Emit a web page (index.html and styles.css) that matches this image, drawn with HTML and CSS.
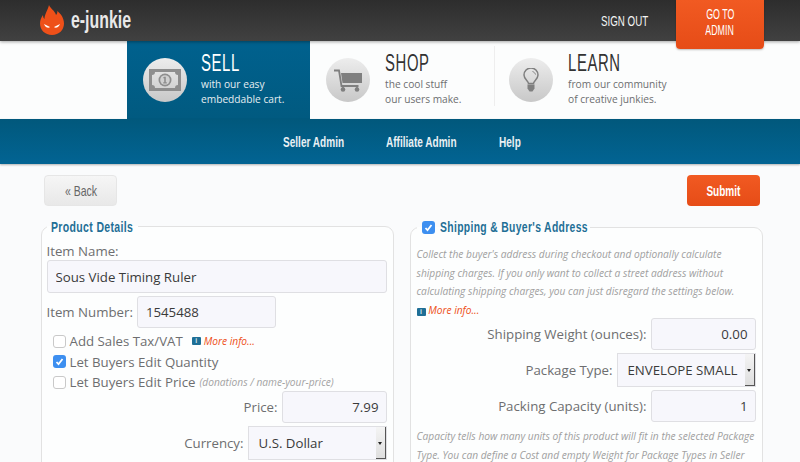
FILE: index.html
```html
<!DOCTYPE html>
<html lang="en">
<head>
<meta charset="utf-8">
<title>e-junkie</title>
<link rel="stylesheet" href="styles.css">
</head>
<body>
<header class="topbar">
  <a class="logo">
    <svg class="flame" viewBox="0 0 24 30" width="24" height="30"><path fill="#ee5019" d="M9 0c1 3 6 6 7 10 1-1 1.500-2 1.300-4C21 9 24 13 24 18.500 24 25 19 30 12 30S0 25 0 18.500C0 15 1.500 12 3 10c0 2 .5 3 1.500 4C4.500 9 8 5 9 0z"/><path fill="#fff" d="M4 19l6 3c-1 1.500-4.500 1-6-3zM20 19l-6 3c1 1.500 4.500 1 6-3z"/></svg>
    <span class="squeeze logo-text">e-junkie</span>
  </a>
  <a class="signout"><span class="squeeze s65">SIGN OUT</span></a>
  <a class="goadmin"><span class="squeeze s63">GO TO</span><span class="squeeze s63">ADMIN</span></a>
</header>
<nav class="sections">
  <div class="tab tab-sell">
    <span class="disc">
      <svg viewBox="0 0 32 22" width="32" height="22"><path fill="#8e8e8e" fill-rule="evenodd" d="M0 0h32v22H0zM6 3c0 2-1 3-3 3v10c2 0 3 1 3 3h20c0-2 1-3 3-3V6c-2 0-3-1-3-3z"/><circle cx="16" cy="11" r="6.500" fill="#8e8e8e"/><circle cx="16" cy="11" r="4.800" fill="#d0d0d0"/><path fill="#8e8e8e" d="M15.200 7.800h1.600v5.400h1v1.200h-3.600v-1.200h1V9.300h-1v-.9z"/></svg>
    </span>
    <div class="tab-text">
      <h2><span class="squeeze s62">SELL</span></h2>
      <p>with our easy<br>embeddable cart.</p>
    </div>
  </div>
  <div class="tab tab-shop">
    <span class="disc">
      <svg viewBox="0 0 28 23" width="28" height="23"><path fill="none" stroke="#7f7f7f" stroke-width="1.800" d="M0 1.500h5l2.500 15.500h17"/><path fill="#7f7f7f" d="M7 4h21v10H8.500z"/><path fill="none" stroke="#7f7f7f" stroke-width="1.500" d="M9 16v3M23 16v3"/><circle cx="9" cy="20.500" r="2.300" fill="#7f7f7f"/><circle cx="23" cy="20.500" r="2.300" fill="#7f7f7f"/></svg>
    </span>
    <div class="tab-text">
      <h2><span class="squeeze s62">SHOP</span></h2>
      <p>the cool stuff<br>our users make.</p>
    </div>
  </div>
  <div class="tab tab-learn">
    <span class="disc">
      <svg viewBox="0 0 16 24" width="16" height="24"><path fill="none" stroke="#7f7f7f" stroke-width="1.500" d="M5.500 15.500c0-2.500-4.500-4-4.500-8.500a7 7 0 0 1 14 0c0 4.500-4.500 6-4.500 8.500z"/><path fill="none" stroke="#7f7f7f" d="M9.500 3.500c1.500.5 2.500 1.500 3 3"/><path fill="#7f7f7f" d="M4.500 16.500h7v4l-2 3h-3l-2-3z"/></svg>
    </span>
    <div class="tab-text">
      <h2><span class="squeeze s62">LEARN</span></h2>
      <p>from our community<br>of creative junkies.</p>
    </div>
  </div>
</nav>
<nav class="subnav">
  <a class="link-seller"><span class="squeeze s67">Seller Admin</span></a>
  <a class="link-affiliate"><span class="squeeze s67">Affiliate Admin</span></a>
  <a class="link-help"><span class="squeeze s67">Help</span></a>
</nav>
<main class="page">
  <div class="actions">
    <a class="btn btn-back"><span class="squeeze s70">« Back</span></a>
    <a class="btn btn-submit"><span class="squeeze s67">Submit</span></a>
  </div>
  <div class="columns">
    <fieldset class="panel">
      <legend class="legend-plain"><span class="squeeze s70 legend-text1">Product Details</span></legend>
      <div class="stack-label">Item Name:</div>
      <input class="field field-full" value="Sous Vide Timing Ruler">
      <div class="row row-number">
        <label>Item Number:</label>
        <input class="field field-num" value="1545488">
      </div>
      <div class="checks">
        <div class="check-row">
          <span class="box"></span><span>Add Sales Tax/VAT</span>
          <span class="info info-gap">i</span><a class="more">More info...</a>
        </div>
        <div class="check-row">
          <span class="box box-on"><svg viewBox="0 0 13 13" width="13" height="13"><path fill="none" stroke="#fff" stroke-width="1.800" d="M3.500 7l2 2.200 4-5.200"/></svg></span><span>Let Buyers Edit Quantity</span>
        </div>
        <div class="check-row">
          <span class="box"></span><span>Let Buyers Edit Price</span>
          <em class="hint">(donations / name-your-price)</em>
        </div>
      </div>
      <div class="row row-end row-price">
        <label>Price:</label>
        <input class="field field-amount" value="7.99">
      </div>
      <div class="row row-end row-select">
        <label>Currency:</label>
        <div class="select"><span class="select-value">U.S. Dollar</span><span class="select-arrow"></span></div>
      </div>
    </fieldset>
    <fieldset class="panel panel-right">
      <legend class="legend-check">
        <span class="box box-on box-legend"><svg viewBox="0 0 13 13" width="13" height="13"><path fill="none" stroke="#fff" stroke-width="1.800" d="M3.500 7l2 2.200 4-5.200"/></svg></span><span class="squeeze s69 legend-text2">Shipping &amp; Buyer's Address</span>
      </legend>
      <p class="note note-first">Collect the buyer's address during checkout and optionally calculate shipping charges. If you only want to collect a street address without calculating shipping charges, you can just disregard the settings below.<br><span class="info">i</span> <a class="more">More info...</a></p>
      <div class="row row-end row-first">
        <label>Shipping Weight (ounces):</label>
        <input class="field field-amount" value="0.00">
      </div>
      <div class="row row-end row-select">
        <label>Package Type:</label>
        <div class="select"><span class="select-value">ENVELOPE SMALL</span><span class="select-arrow"></span></div>
      </div>
      <div class="row row-end row-capacity">
        <label>Packing Capacity (units):</label>
        <input class="field field-amount" value="1">
      </div>
      <p class="note note-after">Capacity tells how many units of this product will fit in the selected Package Type. You can define a Cost and empty Weight for Package Types in Seller</p>
    </fieldset>
  </div>
</main>
</body>
</html>
```
FILE: styles.css
```css
* { box-sizing: border-box; }
html, body { margin: 0; height: 462px; overflow: hidden; }
body { font-family: "Open Sans", sans-serif; background: #fafbfc; color: #6d6e70; }
a { color: inherit; text-decoration: none; }

.squeeze { display: inline-block; white-space: nowrap; font-family: "Liberation Sans", sans-serif; transform-origin: left center; }
.s62 { transform: scaleX(.62); }
.s63 { transform: scaleX(.63); }
.s65 { transform: scaleX(.65); }
.s67 { transform: scaleX(.67); }
.s69 { transform: scaleX(.69); }
.s70 { transform: scaleX(.70); }

.topbar { height: 41px; display: flex; align-items: flex-start; background: linear-gradient(#2d2d2d, #414141); box-shadow: 0 1px 3px rgba(0,0,0,.35); position: relative; z-index: 2; }
.logo { display: flex; align-items: center; margin-left: 40px; height: 41px; width: 561px; }
.flame { display: block; margin-top: -1px; }
.logo-text { margin-left: 7px; color: #e9e9e9; font-size: 23px; font-weight: 700; line-height: 1; transform: scaleX(.69); }
.signout { width: 75px; color: #f4f4f4; font-size: 15px; line-height: 41px; }
.goadmin { width: 88px; height: 49px; background: linear-gradient(#f15a22, #e64c17); border-radius: 0 0 4px 4px; color: #fff; font-size: 14px; line-height: 16px; padding-top: 6px; box-shadow: 0 1px 2px rgba(0,0,0,.25); display: flex; flex-direction: column; align-items: center; }
.goadmin .squeeze { transform-origin: center; }

.sections { height: 78px; padding-left: 127px; display: flex; background: #fcfdfd; }
.tab { display: flex; position: relative; }
.tab-sell { width: 183px; padding: 13px 0 0 16px; background: linear-gradient(#00618e, #015a80); color: #fff; }
.tab-shop { width: 184px; padding: 13px 0 0 16px; color: #6d6e70; }
.tab-learn { padding: 8px 0 0 14px; border-left: 1px solid #eeeeee; height: 60px; margin-top: 5px; color: #6d6e70; }
.disc { width: 44px; height: 44px; margin-top: 4px; border-radius: 50%; background: linear-gradient(#ededed, #c8c8c8); display: flex; align-items: center; justify-content: center; flex: none; }
.tab-text { margin-left: 15px; margin-top: -5px; }
.tab-sell .tab-text { margin-left: 14px; }
.tab-text h2 { margin: 0; height: 26px; font-size: 24px; font-weight: 400; line-height: 26px; color: #333; letter-spacing: 1px; }
.tab-sell .tab-text h2 { color: #fff; }
.tab-text p { margin: 2px 0 0; font-size: 10.200px; line-height: 15px; white-space: nowrap; }
.tab-sell .tab-text p { color: #e6eef2; }

.subnav { height: 45px; padding-left: 4px; background: linear-gradient(#01587c, #026493); display: flex; justify-content: center; gap: 42px; align-items: center; box-shadow: 0 1px 2px rgba(0,0,0,.3); position: relative; color: #e9f0f4; font-size: 15px; font-weight: 700; }
.subnav a { display: block; line-height: 18px; }
.link-seller { width: 61px; }
.link-affiliate { width: 71px; }
.link-help { width: 22px; }

.page { padding: 11px 40px 0 41px; }
.actions { display: flex; justify-content: space-between; padding-left: 3px; height: 31px; }
.btn { width: 73px; height: 31px; border-radius: 4px; font-size: 15px; line-height: 31px; display: flex; justify-content: center; }
.btn .squeeze { transform-origin: center; }
.btn-back { background: linear-gradient(#f6f6f6, #e8e8e8); border: 1px solid #e6e6e6; color: #666; line-height: 29px; }
.btn-submit { background: linear-gradient(#f15a22, #e64c17); color: #fff; font-weight: 700; }

.columns { display: grid; grid-template-columns: 353px 353px; column-gap: 16px; margin-top: 11px; }
.panel { margin: 0; padding: 0 6.500px 0 4.500px; border: 1.500px solid #e2e2e2; border-radius: 9px; background: #fdfefe; min-width: 0; height: 300px; }
.panel-right { margin-top: 1px; padding-left: 5.500px; }
.panel legend { color: #1f6f96; font-size: 15px; font-weight: 700; line-height: 18px; }
.legend-plain { padding: 0 4px; }
.legend-text1 { width: 83px; letter-spacing: .5px; }
.legend-check { display: flex; align-items: center; padding: 0 3px 0 5px; }
.legend-text2 { width: 147px; letter-spacing: .5px; }

.stack-label { font-size: 13.250px; line-height: 18px; margin-top: 6px; }
.field { display: block; height: 33px; border: 1px solid #dfdfe3; border-radius: 3px; background: #f7f7fc; font: 13.250px "Open Sans", sans-serif; color: #3a3a3a; padding: 0 7px 0 8px; outline: none; }
.field-full { width: 340px; }
.field-num { width: 139px; height: 32px; }
.field-amount { width: 105px; height: 32px; text-align: right; }
.row { display: flex; align-items: center; gap: 4px; font-size: 13.250px; }
.row-number { margin-top: 3px; }
.row-end { justify-content: flex-end; }
.checks { margin-top: 2.750px; }
.check-row { display: flex; align-items: center; height: 20.500px; padding-left: 6px; font-size: 13.250px; }
.box { width: 13px; height: 13px; border: 1px solid #c9c9c9; border-radius: 3px; background: #fff; margin-right: 4px; flex: none; display: block; }
.box-on { background: #3d8ff0; border: 0; }
.box-on svg { display: block; }
.box-legend { margin-right: 5px; }
.info { display: inline-block; width: 9px; height: 8px; border-radius: 1px; background: #1f6f96; color: #cfe3ee; font: 700 7px/8px "Liberation Sans", sans-serif; text-align: center; }
.info-gap { margin: 0 3px 0 9px; }
.more { font-size: 10.200px; font-style: italic; color: #ee5019; }
.hint { font-size: 10.200px; color: #a3a3a3; margin-left: 4px; white-space: nowrap; }
.row-price { margin-top: -1px; }
.row-select { margin-top: 3px; }
.row-first { margin-top: -1px; }
.row-capacity { margin-top: 3px; }
.select { width: 139px; height: 34px; border: 1px solid #dfdfe3; background: #f7f7fc; display: flex; align-items: center; color: #3a3a3a; position: relative; }
.select-value { flex: 1; padding-left: 10px; font-size: 13.250px; white-space: nowrap; }
.select-arrow { width: 10px; align-self: stretch; background: linear-gradient(#f4f4f4, #dedede); border-right: 1.500px solid #555; border-bottom: 1.500px solid #555; position: relative; flex: none; }
.select-arrow::after { content: ""; position: absolute; left: 2px; top: 15px; border: 2.500px solid transparent; border-top: 3px solid #222; }
.note { margin: 0; font-size: 10.200px; font-style: italic; color: #a0a0a0; line-height: 18.500px; }
.note-first { margin-top: 9px; }
.note-after { margin-top: 5px; }
```
